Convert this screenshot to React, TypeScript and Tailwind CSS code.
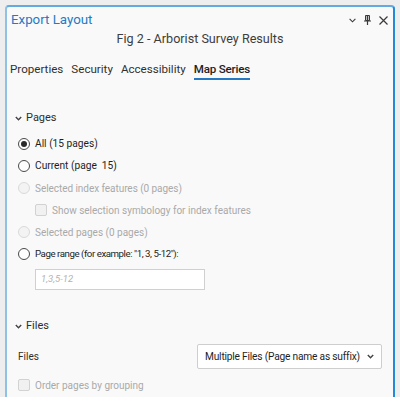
function Radio({
  label,
  checked,
  disabled,
  size = 'text-[10px] tracking-[-0.2px]',
}: {
  label: string
  checked?: boolean
  disabled?: boolean
  size?: string
}) {
  return (
    <div className="flex h-[22px] items-center gap-[5px] pl-[11px]">
      <span
        className={`flex h-[12px] w-[12px] shrink-0 items-center justify-center rounded-full border ${
          disabled ? 'border-[#dadada] bg-[#f3f3f3]' : 'border-[#4a4a4a] bg-white'
        }`}
      >
        {checked && <span className="h-[6px] w-[6px] rounded-full bg-[#2b2b2b]" />}
      </span>
      <span className={`whitespace-pre ${size} ${disabled ? 'text-[#a9a9a9]' : 'text-[#1e1e1e]'}`}>{label}</span>
    </div>
  )
}

function Check({ label, indent }: { label: string; indent: string }) {
  return (
    <div className={`flex h-[22px] items-center gap-[5px] ${indent}`}>
      <span className="h-[12px] w-[12px] rounded-[2px] border border-[#d2d2d2] bg-[#f1f1f1]" />
      <span className="text-[10px] text-[#a9a9a9]">{label}</span>
    </div>
  )
}

function Chevron({ className }: { className?: string }) {
  return (
    <svg width="7" height="5" viewBox="0 0 7 5" className={className}>
      <path d="M0.8 1 L3.5 3.8 L6.2 1" fill="none" stroke="currentColor" strokeWidth="1.4" />
    </svg>
  )
}

function SectionHeader({ title }: { title: string }) {
  return (
    <div className="flex h-[16px] items-center gap-[4px] pl-[8px] text-[11px] text-[#2e2e2e]">
      <Chevron className="text-[#444]" />
      <span>{title}</span>
    </div>
  )
}

export default function App() {
  return (
    <div
      className="h-[397px] w-[400px] overflow-hidden bg-[#eeeeee] pt-[5px]"
      style={{ fontFamily: 'Roboto, "Liberation Sans", sans-serif' }}
    >
      <div className="ml-[5px] mr-[5px] h-[400px] overflow-hidden rounded-t-[4px] border-x-2 border-t-2 border-l-[#8fc0e6] border-r-[#2389d8] border-t-[#62aae0] bg-[#f9f9f9]">
        <div className="flex h-[26px] items-center justify-between pl-[4px] pr-[5px]">
          <span className="text-[13.3px] text-[#2579c2]">Export Layout</span>
          <div className="flex items-center gap-[8px] text-[#3a3a3a]">
            <svg width="7" height="5" viewBox="0 0 7 5">
              <path d="M0.6 0.8 L3.5 3.8 L6.4 0.8" fill="none" stroke="currentColor" strokeWidth="1.1" />
            </svg>
            <svg width="7" height="10" viewBox="0 0 7 10">
              <path d="M1.5 0.5 H5.5 V5.5 H1.5 Z" fill="none" stroke="currentColor" strokeWidth="1" />
              <path d="M3.5 0.5 V5.5" stroke="currentColor" strokeWidth="1.6" />
              <path d="M0 6 H7" stroke="currentColor" strokeWidth="1.2" />
              <path d="M3.5 6 V10" stroke="currentColor" strokeWidth="1.2" />
            </svg>
            <svg width="9" height="9" viewBox="0 0 9 9">
              <path d="M0.5 0.5 L8.5 8.5 M8.5 0.5 L0.5 8.5" fill="none" stroke="currentColor" strokeWidth="1.2" />
            </svg>
          </div>
        </div>
        <div className="mt-[-1px] h-[14px] text-center text-[12.6px] leading-[14px] text-[#3d3d3d]">
          Fig 2 - Arborist Survey Results
        </div>
        <div className="mt-[14px] flex h-[20px] gap-[8px] pl-[3px] text-[11.6px] text-[#303030]">
          <span className="h-[20px] leading-[18px]">Properties</span>
          <span className="h-[20px] leading-[18px]">Security</span>
          <span className="h-[20px] leading-[18px]">Accessibility</span>
          <span className="h-[20px] border-b-2 border-[#2579c2] font-medium leading-[18px] tracking-[-0.2px] text-[#1e1e1e]">
            Map Series
          </span>
        </div>

        <div className="mt-[30px]">
          <SectionHeader title="Pages" />
        </div>
        <div className="mt-[7px]">
          <Radio label="All (15 pages)" checked size="text-[10.2px]" />
          <Radio label="Current (page  15)" size="text-[10.2px]" />
          <Radio label="Selected index features (0 pages)" disabled size="text-[10px] tracking-[-0.05px]" />
          <Check label="Show selection symbology for index features" indent="pl-[28px]" />
          <Radio label="Selected pages (0 pages)" disabled size="text-[10px]" />
          <Radio label="Page range (for example: &quot;1, 3, 5-12&quot;):" size="text-[9.7px] tracking-[-0.45px]" />
          <div className="ml-[28px] mt-[4px] flex h-[21px] w-[170px] items-center border border-[#d0d0d0] bg-white px-[5px] text-[9.5px] italic text-[#b3b3b3]">
            1,3,5-12
          </div>
        </div>

        <div className="mt-[28px]">
          <SectionHeader title="Files" />
        </div>
        <div className="mt-[10px] flex items-center justify-between pl-[11px] pr-[11px]">
          <span className="text-[10px] text-[#2e2e2e]">Files</span>
          <div className="flex h-[25px] w-[185px] items-center justify-between rounded-[2px] border border-[#cecece] bg-white pl-[7px] pr-[7px] text-[10.2px] tracking-[-0.2px] text-[#1e1e1e]">
            <span className="whitespace-nowrap">Multiple Files (Page name as suffix)</span>
            <Chevron className="shrink-0 text-[#444]" />
          </div>
        </div>
        <div className="mt-[5px]">
          <Check label="Order pages by grouping" indent="pl-[11px]" />
        </div>
      </div>
    </div>
  )
}
